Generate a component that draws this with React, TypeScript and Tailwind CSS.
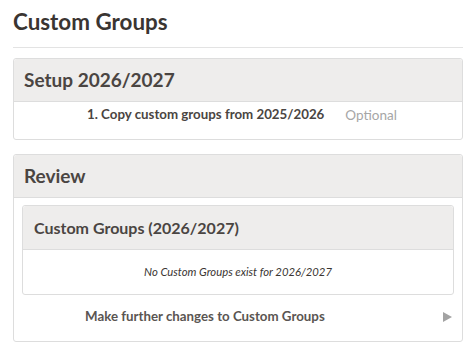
const font = { fontFamily: "Lato, 'Noto Sans', sans-serif" };

function Panel({ title, size = "text-[19px]", children }: { title: string; size?: string; children: React.ReactNode }) {
  return (
    <div className="rounded-[3px] border border-[#dddddd] bg-white">
      <div className={`h-[43px] flex items-center px-[10px] bg-[#eeedec] border-b border-[#dddddd] rounded-t-[3px] font-bold text-[#4a4542] ${size}`}>
        {title}
      </div>
      {children}
    </div>
  );
}

export default function App() {
  return (
    <div className="w-[469px] h-[353px] bg-white pl-[13px] pr-[6px] pt-[8px]" style={font}>
      <h1 className="text-[22.4px] font-bold text-[#3a3532] leading-[28px]">Custom Groups</h1>
      <div className="mt-[11px] border-t border-[#e3e3e3]" />

      <div className="mt-[10px]">
        <Panel title="Setup 2026/2027">
          <div className="h-[37px] flex items-start pt-[3px] pl-[73px] text-[13.3px]">
            <span className="font-bold text-[#4a4542]">1. Copy custom groups from 2025/2026</span>
            <span className="ml-[21px] text-[13.5px] text-[#a6a6a6]">Optional</span>
          </div>
        </Panel>
      </div>

      <div className="mt-[14px]">
        <Panel title="Review">
          <div className="px-[8px] pt-[7px]">
            <div className="rounded-[3px] border border-[#dddddd]">
              <div className="h-[44px] flex items-center px-[11px] bg-[#eeedec] border-b border-[#dddddd] rounded-t-[3px] font-bold text-[16px] text-[#4a4542]">
                Custom Groups (2026/2027)
              </div>
              <div className="h-[44px] flex items-center justify-center text-[11.3px] italic text-[#3a3532]">
                No Custom Groups exist for 2026/2027
              </div>
            </div>
          </div>
          <div className="h-[46px] flex items-center pl-[71px] pr-[10px] pb-[2px]">
            <span className="flex-1 font-bold text-[13.3px] text-[#5a5552]">Make further changes to Custom Groups</span>
            <svg width="9" height="10" viewBox="0 0 9 10">
              <path d="M0 0 L9 5 L0 10 Z" fill="#a3a3a3" />
            </svg>
          </div>
        </Panel>
      </div>
    </div>
  );
}
